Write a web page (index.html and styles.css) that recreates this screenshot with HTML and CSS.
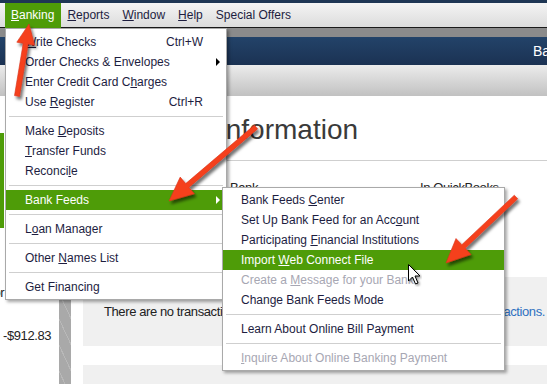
FILE: index.html
```html
<!DOCTYPE html>
<html lang="en">
<head>
    <meta charset="UTF-8">
    <title>Banking Menu - Bank Feeds</title>
    <link rel="stylesheet" href="styles.css">
</head>
<body>
    <div class="screen">
        <div class="titlestrip"></div>
        <nav class="menubar">
            <span class="mb-item active"><u>B</u>anking</span>
            <span class="mb-item"><u>R</u>eports</span>
            <span class="mb-item"><u>W</u>indow</span>
            <span class="mb-item"><u>H</u>elp</span>
            <span class="mb-item">Special Offers</span>
        </nav>
        <div class="graystrip"></div>
        <div class="navbar"><span>Ba</span></div>
        <div class="toolbar"></div>

        <div class="main">
            <aside class="leftpane">
                <div class="acct selected"></div>
                <div class="acct-line">For Banking</div>
                <div class="acct-amount">-$912.83</div>
            </aside>
            <div class="splitter"></div>
            <section class="content">
                <h1 class="page-title">Account Information</h1>
                <div class="cols">
                    <span>Account</span>
                    <span>Bank</span>
                    <span>In QuickBooks</span>
                </div>
                <div class="notice">
                    <span>There are no transactions to review.</span>
                    <a class="link">Download transactions.</a>
                </div>
                <div class="notice next"></div>
            </section>
        </div>

        <!-- Banking dropdown -->
        <div class="menu menu-main">
            <div class="mi"><span><u>W</u>rite Checks</span><span class="key">Ctrl+W</span></div>
            <div class="mi"><span>Order Checks &amp; Envelopes</span><span class="more"></span></div>
            <div class="mi"><span>Enter Credit Card C<u>h</u>arges</span></div>
            <div class="mi"><span>Use <u>R</u>egister</span><span class="key">Ctrl+R</span></div>
            <div class="sep"></div>
            <div class="mi"><span>Make <u>D</u>eposits</span></div>
            <div class="mi"><span><u>T</u>ransfer Funds</span></div>
            <div class="mi"><span>Reconci<u>l</u>e</span></div>
            <div class="sep"></div>
            <div class="mi hl"><span>Bank Feeds</span><span class="more"></span></div>
            <div class="sep"></div>
            <div class="mi"><span>L<u>o</u>an Manager</span></div>
            <div class="sep"></div>
            <div class="mi"><span>Other <u>N</u>ames List</span></div>
            <div class="sep"></div>
            <div class="mi"><span>Get Financing</span></div>
        </div>

        <!-- Bank Feeds submenu -->
        <div class="menu menu-sub">
            <div class="mi"><span>Bank Feeds <u>C</u>enter</span></div>
            <div class="mi"><span>Set Up Bank Feed for an Acc<u>o</u>unt</span></div>
            <div class="mi"><span>Participating <u>F</u>inancial Institutions</span></div>
            <div class="mi hl"><span>Import <u>W</u>eb Connect File</span></div>
            <div class="mi off"><span>Create a <u>M</u>essage for your Bank</span></div>
            <div class="mi"><span>Change Bank Feeds Mode</span></div>
            <div class="sep"></div>
            <div class="mi"><span>Learn About Online Bill Payment</span></div>
            <div class="sep"></div>
            <div class="mi off"><span><u>I</u>nquire About Online Banking Payment</span></div>
        </div>

        <!-- callout arrows -->
        <svg class="arrows" width="547" height="384" viewBox="0 0 547 384">
            <defs>
                <filter id="shade" x="-30%" y="-30%" width="160%" height="160%">
                    <feDropShadow dx="2" dy="3" stdDeviation="1.5" flood-color="#000" flood-opacity="0.55"/>
                </filter>
            </defs>
            <g fill="#f5411f" stroke="#d83219" stroke-width="0.6" stroke-linejoin="round" filter="url(#shade)">
                <polygon points="19.5,96.4 28.2,44.1 34.6,45.2 29,24 16.8,42.2 23.2,43.3 14.5,95.6"/>
                <polygon points="257.6,128.9 188.9,187.4 194.4,193.8 169,201 180.2,177.1 185.7,183.6 254.4,125.1"/>
                <polygon points="517.7,198.8 465.2,248.3 471,254.5 446,263 456,238.5 461.8,244.7 514.3,195.2"/>
            </g>
        </svg>

        <svg class="cursor" width="15" height="24" viewBox="0 0 15 24">
            <defs>
                <filter id="cshade" x="-40%" y="-40%" width="180%" height="180%">
                    <feDropShadow dx="1.5" dy="1.5" stdDeviation="1" flood-color="#000" flood-opacity="0.4"/>
                </filter>
            </defs>
            <path d="M1.5 1.5 L1.5 18 L5.5 14 L8.5 21 L11 20 L8 13 L13 13 Z" fill="#fff" stroke="#000" stroke-width="1" stroke-linejoin="round" filter="url(#cshade)"/>
        </svg>
    </div>
</body>
</html>
```

FILE: styles.css
```css
html, body {
    margin: 0;
    padding: 0;
}
body {
    background-color: #fff;
    font-family: "Liberation Sans", Arial, sans-serif;
}
.screen {
    position: relative;
    width: 547px;
    height: 384px;
    overflow: hidden;
    background-color: #fff;
}
.titlestrip {
    height: 3px;
    background-color: #1e3654;
}
.menubar {
    display: flex;
    align-items: flex-start;
    height: 24px;
    padding-left: 4.5px;
    background: linear-gradient(#f4f4f4, #dcdcdc);
    border-bottom: 1px solid #1a1a1a;
    font-size: 12px;
    color: #1d1d3f;
}
.mb-item {
    height: 24px;
    line-height: 24px;
    padding: 0 6.5px;
    white-space: nowrap;
}
.mb-item.active {
    position: relative;
    height: 25px;
    background-color: #4e9c08;
    color: #fff;
}
.graystrip {
    height: 9px;
    background-color: #8b8b8b;
}
.navbar {
    height: 28px;
    line-height: 28px;
    padding-left: 533px;
    background: linear-gradient(#234369, #1b3253);
    color: #fff;
    font-size: 14px;
    white-space: nowrap;
}
.toolbar {
    height: 31px;
    background: linear-gradient(#ececec, #c1c1c1);
}
.main {
    display: flex;
    height: 288px;
}
.leftpane {
    width: 59px;
    padding-top: 37px;
    box-sizing: border-box;
    font-size: 13px;
    letter-spacing: -0.4px;
    color: #222;
    white-space: nowrap;
}
.acct.selected {
    height: 95px;
    width: 4px;
    background-color: #4e9c08;
}
.acct-line {
    height: 14px;
    margin-top: 58px;
    line-height: 14px;
    text-indent: -14px;
    overflow: hidden;
}
.acct-amount {
    margin-top: 27px;
    line-height: 18px;
    padding-left: 3px;
}
.splitter {
    width: 12px;
    background-color: #a9a9a9;
    background-image: repeating-linear-gradient(65deg, transparent 0 5px, rgba(255,255,255,0.18) 5px 6px, transparent 6px 11px);
}
.content {
    flex: 1;
    padding-left: 12px;
    color: #333;
}
.page-title {
    margin: 18px 0 0;
    padding: 0 0 14px 26px;
    font-size: 28px;
    line-height: 32px;
    font-weight: normal;
    color: #3a3a3a;
    border-bottom: 1px solid #cfcfcf;
    white-space: nowrap;
}
.cols {
    display: grid;
    grid-template-columns: 126px 190px 1fr;
    margin-top: 19px;
    padding-left: 21px;
    font-size: 13px;
    letter-spacing: -0.4px;
    line-height: 16px;
    color: #222;
}
.notice {
    display: flex;
    align-items: center;
    justify-content: space-between;
    height: 69px;
    margin-top: 81px;
    padding: 0 2px 0 21px;
    background-color: #f0f0f0;
    font-size: 13px;
    letter-spacing: -0.4px;
    color: #222;
    white-space: nowrap;
}
.notice.next {
    margin-top: 19px;
    height: 40px;
}
.link {
    color: #2f70c0;
}

/* dropdown menus */
.menu {
    position: absolute;
    background-color: #fff;
    border: 1px solid #a9a9a9;
    box-shadow: 2px 2px 3px rgba(0,0,0,0.35);
    font-size: 12px;
    color: #1d1d3f;
}
.menu-main {
    left: 5px;
    top: 28px;
    width: 220px;
    padding: 3px 0 2px;
}
.menu-sub {
    left: 222px;
    top: 187px;
    width: 281px;
    padding: 2px 0;
}
.mi {
    display: flex;
    align-items: center;
    height: 20px;
    padding: 0 6px 0 19px;
    white-space: nowrap;
}
.menu-sub .mi {
    padding-left: 18px;
}
.mi .key {
    margin-left: auto;
    margin-right: 17px;
}
.mi .more {
    margin-left: auto;
    width: 0;
    height: 0;
    border-left: 4px solid #000;
    border-top: 4px solid transparent;
    border-bottom: 4px solid transparent;
}
.mi.hl {
    background-color: #4e9c08;
    color: #fff;
}
.mi.hl .more {
    border-left-color: #fff;
}
.mi.off {
    color: #a7a7b3;
}
.sep {
    height: 1px;
    margin: 4px 3px;
    background-color: #cfcfcf;
}

.arrows {
    position: absolute;
    left: 0;
    top: 0;
    pointer-events: none;
}
.cursor {
    position: absolute;
    left: 407px;
    top: 263px;
}
```
